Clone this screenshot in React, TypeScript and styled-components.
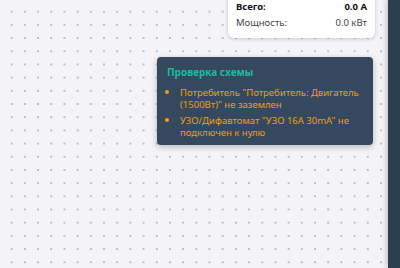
import styled, { createGlobalStyle } from 'styled-components'

const GlobalStyle = createGlobalStyle`
  html, body {
    margin: 0;
    padding: 0;
    width: 400px;
    height: 268px;
    overflow: hidden;
    font-family: "Noto Sans", "Open Sans", sans-serif;
  }
`

const Page = styled.div`
  display: flex;
  width: 400px;
  height: 268px;
  overflow: hidden;
`

const Canvas = styled.div`
  position: relative;
  flex: 1;
  background-color: #f4f4f8;
  background-image: radial-gradient(circle, #b9b9c0 0.7px, transparent 1px);
  background-size: 13.2px 13.2px;
  background-position: 5.1px 5.1px;
`

const Sidebar = styled.div`
  width: 12px;
  background: #2c3e50;
  box-shadow: -2px 0 5px rgba(0, 0, 0, 0.18);
  z-index: 2;
`

const SummaryCard = styled.div`
  position: absolute;
  top: -10px;
  right: 13px;
  width: 147px;
  box-sizing: border-box;
  padding: 11px 8px 9px 8px;
  background: #fff;
  border-radius: 6px;
  box-shadow: 0 1px 4px rgba(0, 0, 0, 0.18);
  font-size: 9.5px;
  color: #333;
`

const SummaryRow = styled.div<{ $bold?: boolean }>`
  display: flex;
  justify-content: space-between;
  line-height: 12px;
  margin-bottom: ${p => (p.$bold ? '4px' : '0')};
  font-weight: ${p => (p.$bold ? 700 : 400)};
  color: ${p => (p.$bold ? '#111' : '#444')};
`

const CheckPanel = styled.div`
  position: absolute;
  left: 157px;
  top: 57px;
  width: 216px;
  box-sizing: border-box;
  padding: 9px 10px 7px 10px;
  background: #34495e;
  border-radius: 4px;
  box-shadow: 0 2px 6px rgba(0, 0, 0, 0.25);
`

const CheckTitle = styled.div`
  color: #1abc9c;
  font-weight: 700;
  font-size: 10px;
  line-height: 13px;
  margin-bottom: 7px;
`

const IssueList = styled.ul`
  margin: 0;
  padding-left: 13px;
  color: #f39c12;
  font-size: 9.5px;
  line-height: 11.5px;
`

const Issue = styled.li`
  margin-bottom: 4px;

  &::marker {
    font-size: 11px;
  }

  &:last-child {
    margin-bottom: 0;
  }
`

const issues = [
  'Потребитель "Потребитель: Двигатель (1500Вт)" не заземлен',
  'УЗО/Дифавтомат "УЗО 16А 30mA" не подключен к нулю'
]

const App: React.FC = () => {
  return (
    <Page>
      <GlobalStyle />
      <Canvas>
        <SummaryCard>
          <SummaryRow $bold>
            <span>Всего:</span>
            <span>0.0 A</span>
          </SummaryRow>
          <SummaryRow>
            <span>Мощность:</span>
            <span>0.0 кВт</span>
          </SummaryRow>
        </SummaryCard>
        <CheckPanel>
          <CheckTitle>Проверка схемы</CheckTitle>
          <IssueList>
            {issues.map(text => (
              <Issue key={text}>{text}</Issue>
            ))}
          </IssueList>
        </CheckPanel>
      </Canvas>
      <Sidebar />
    </Page>
  )
}

export default App
